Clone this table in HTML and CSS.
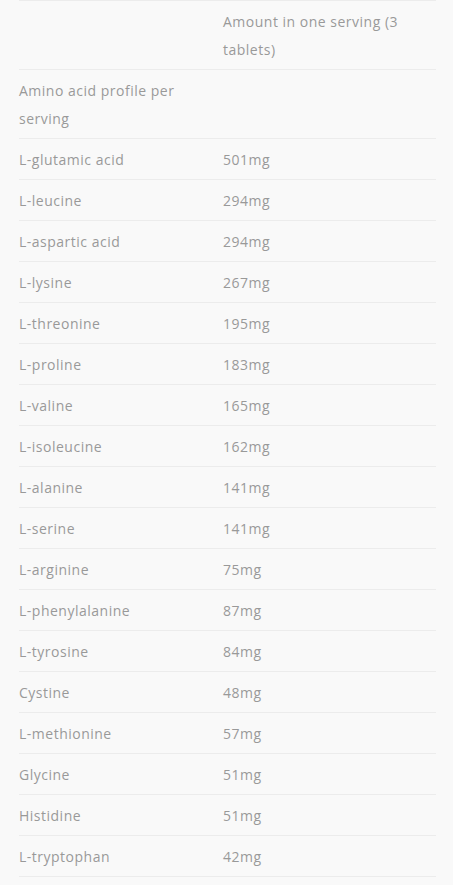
FILE: index.html
```html
<!DOCTYPE html>
<html>
<head>
<meta charset="utf-8">
<link rel="stylesheet" href="styles.css">
</head>
<body>
<div class="wrap">
<table class="amino">
<tr><td class="c1"></td><td class="c2">Amount in one serving (3 tablets)</td></tr>
<tr><td class="c1">Amino acid profile per serving</td><td class="c2"></td></tr>
<tr><td class="c1">L-glutamic acid</td><td class="c2">501mg</td></tr>
<tr><td class="c1">L-leucine</td><td class="c2">294mg</td></tr>
<tr><td class="c1">L-aspartic acid</td><td class="c2">294mg</td></tr>
<tr><td class="c1">L-lysine</td><td class="c2">267mg</td></tr>
<tr><td class="c1">L-threonine</td><td class="c2">195mg</td></tr>
<tr><td class="c1">L-proline</td><td class="c2">183mg</td></tr>
<tr><td class="c1">L-valine</td><td class="c2">165mg</td></tr>
<tr><td class="c1">L-isoleucine</td><td class="c2">162mg</td></tr>
<tr><td class="c1">L-alanine</td><td class="c2">141mg</td></tr>
<tr><td class="c1">L-serine</td><td class="c2">141mg</td></tr>
<tr><td class="c1">L-arginine</td><td class="c2">75mg</td></tr>
<tr><td class="c1">L-phenylalanine</td><td class="c2">87mg</td></tr>
<tr><td class="c1">L-tyrosine</td><td class="c2">84mg</td></tr>
<tr><td class="c1">Cystine</td><td class="c2">48mg</td></tr>
<tr><td class="c1">L-methionine</td><td class="c2">57mg</td></tr>
<tr><td class="c1">Glycine</td><td class="c2">51mg</td></tr>
<tr><td class="c1">Histidine</td><td class="c2">51mg</td></tr>
<tr><td class="c1">L-tryptophan</td><td class="c2">42mg</td></tr>
</table>
</div>
</body>
</html>
```
FILE: styles.css
```css
html, body {
  margin: 0;
  padding: 0;
  background: #f9f9f9;
}
.wrap {
  padding: 0 17px 0 19px;
}
.amino {
  width: 417px;
  border-collapse: collapse;
  border-top: 1px solid #ececec;
  font-family: "Open Sans", sans-serif;
  font-size: 14px;
  letter-spacing: 0.5px;
  line-height: 28px;
  color: #999;
}
.amino td {
  padding: 7px 0 5px;
  border-bottom: 1px solid #ececec;
  vertical-align: top;
  text-align: left;
}
.amino .c1 {
  width: 204px;
}
```
